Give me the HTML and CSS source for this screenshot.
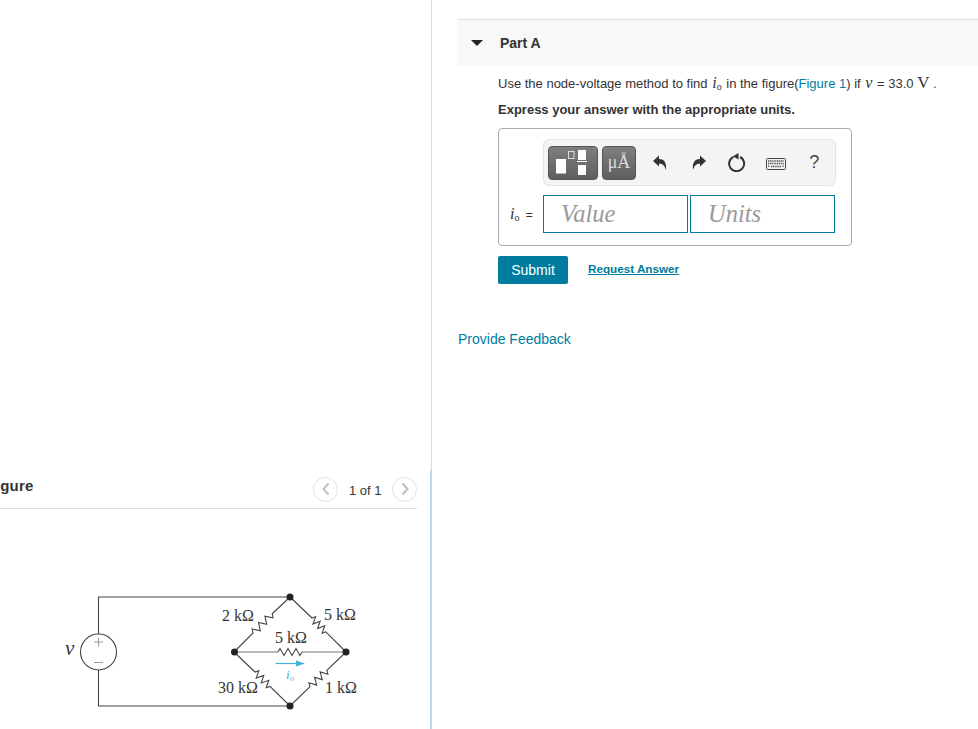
FILE: index.html

```html
<!DOCTYPE html>
<html lang="en">
<head>
  <meta charset="UTF-8" />
  <meta name="viewport" content="width=device-width, initial-scale=1.0" />
  <title>Part A</title>
  <link rel="stylesheet" href="styles.css">
</head>
<body>
  <div class="figure-pane">
    <div class="figure-head">
      <h2>Figure</h2>
      <div class="pager">
        <span class="pager-btn"><svg width="10" height="14" viewBox="0 0 10 14"><path d="M7.5 1.5 L2.5 7 L7.5 12.5" /></svg></span>
        <span class="pager-text">1 of 1</span>
        <span class="pager-btn"><svg width="10" height="14" viewBox="0 0 10 14"><path d="M2.5 1.5 L7.5 7 L2.5 12.5" /></svg></span>
      </div>
    </div>
    <svg class="circuit" width="320" height="130" viewBox="40 585 320 130">
      <!-- outer loop -->
      <path class="wire" d="M98.5 634 V597 H290 M98.5 670 V706 H290" />
      <!-- diamond with resistors -->
      <path class="wire" d="M234 652 L253 633 L252.1 628.9 L260.3 630.7 L258.5 622.5 L266.7 624.3 L264.9 616.1 L273.1 617.9 L272.2 613.8 L290 597" />
      <path class="wire" d="M290 597 L312 618 L315.6 616.6 L313 624 L320.2 621.2 L317.6 628.6 L324.8 625.8 L322.2 633.2 L325.8 631.8 L346 652" />
      <path class="wire mid" d="M234 652 H278 M302 652 H346" />
      <path class="wire" d="M278 652 L280 648.5 L284 655.5 L288 648.5 L292 655.5 L296 648.5 L300 655.5 L302 652" />
      <path class="wire" d="M234 652 L255 672 L258.8 670.7 L256.2 678.1 L263.8 675.5 L261.2 682.9 L268.8 680.3 L266.2 687.7 L270 686.4 L290 706" />
      <path class="wire" d="M290 706 L310 686.7 L308.9 682.8 L316.7 685.1 L314.5 677.4 L322.3 679.6 L320.1 671.9 L327.9 674.2 L326.8 670.3 L346 652" />
      <!-- source -->
      <circle class="wire" cx="98.5" cy="652" r="18" />
      <path class="sign" d="M94 642 H103 M98.5 637.5 V646.5 M94 662.5 H103" />
      <!-- nodes -->
      <circle class="node" cx="290" cy="597" r="3.5" />
      <circle class="node" cx="234.5" cy="652" r="3.5" />
      <circle class="node" cx="346" cy="652" r="3.5" />
      <circle class="node" cx="290" cy="706" r="3.5" />
      <!-- current arrow -->
      <path class="arrow-line" d="M275.5 663.5 H298" />
      <path class="arrow-head" d="M296 660.5 L305 663.5 L296 666.5 Z" />
      <text class="cur-label" x="286" y="679">i</text>
      <text class="cur-sub" x="290" y="681">o</text>
      <text class="val" x="222" y="621">2 kΩ</text>
      <text class="val" x="324" y="620">5 kΩ</text>
      <text class="val" x="275" y="643">5 kΩ</text>
      <text class="val" x="218" y="693">30 kΩ</text>
      <text class="val" x="325" y="693">1 kΩ</text>
      <text class="src-label" x="65" y="655">v</text>
    </svg>
  </div>

  <div class="main-pane">
    <div class="part-head">
      <span class="caret"></span>
      <span class="part-title">Part A</span>
    </div>
    <div class="part-body">
      <p class="prompt">Use the node-voltage method to find <i class="math">i<sub>o</sub></i> in the figure(<a href="#">Figure 1</a>) if <i class="math">v</i> = 33.0 <span class="unit">V</span> .</p>
      <p class="instr">Express your answer with the appropriate units.</p>
      <div class="answer-box">
        <div class="toolbar">
          <span class="tool-btn tool-wide">
            <svg width="40" height="26" viewBox="0 0 40 26">
              <rect x="3" y="9" width="10" height="14.5" fill="#fff" />
              <rect x="15.5" y="1.5" width="5.5" height="7" fill="none" stroke="#ddd" />
              <rect x="25" y="0" width="8" height="10" fill="#fff" />
              <rect x="24" y="11" width="10" height="1" fill="#fff" />
              <rect x="25" y="15" width="8" height="10" fill="#fff" />
            </svg>
          </span>
          <span class="tool-btn tool-unit">μÅ</span>
          <span class="tool-icon tool-first">
            <svg width="14" height="16" viewBox="0 0 14 16"><path d="M0 6 L6 0.5 V4 C10.5 4 14 7 13 15 C11.5 10.5 10 8.8 6 8.8 V11.5 Z" /></svg>
          </span>
          <span class="tool-icon">
            <svg width="14" height="16" viewBox="0 0 14 16"><path d="M14 6 L8 0.5 V4 C3.5 4 0 7 1 15 C2.5 10.5 4 8.8 8 8.8 V11.5 Z" /></svg>
          </span>
          <span class="tool-icon">
            <svg width="18" height="19" viewBox="0 0 18 19"><path class="reset" d="M5.5 3.9 A7.5 7.5 0 1 0 12 4" /><path d="M10.5 0 L10.5 6.5 L5 3.3 Z" /></svg>
          </span>
          <span class="tool-icon tool-keys">
            <svg width="20" height="12" viewBox="0 0 20 12">
              <rect x="0.5" y="0.5" width="19" height="11" rx="1" fill="#f4f4f4" stroke="#444" />
              <path class="keys" d="M2 3 H18 M2 5.5 H18 M2 8 H3.5 M5 8.5 H15 M16.5 8 H18" />
            </svg>
          </span>
          <span class="tool-icon tool-help">?</span>
        </div>
        <div class="input-row">
          <span class="input-label"><i class="math">i<sub>o</sub></i> <span class="eq">=</span></span>
          <span class="field">Value</span>
          <span class="field">Units</span>
        </div>
      </div>
      <div class="actions">
        <button class="submit" type="button">Submit</button>
        <a class="request" href="#">Request Answer</a>
      </div>
    </div>
    <a class="feedback" href="#">Provide Feedback</a>
  </div>
</body>
</html>
```

FILE: styles.css

```css
html, body {
  height: 100%;
}
body {
  margin: 0;
  display: flex;
  overflow: hidden;
  background: #fff;
  color: #333;
  font-family: "Liberation Sans", Arial, sans-serif;
  font-size: 14px;
}
a {
  color: #007c9e;
  text-decoration: none;
}

/* left pane */
.figure-pane {
  width: 431px;
  height: 729px;
  box-sizing: border-box;
  padding-top: 475px;
  overflow: hidden;
  flex: none;
}
.figure-head {
  width: 417px;
  height: 34px;
  box-sizing: border-box;
  border-bottom: 1px solid #ddd;
  display: flex;
  justify-content: space-between;
}
.figure-head h2 {
  margin: 0 0 0 -13.5px;
  font-size: 15px;
  letter-spacing: 0.2px;
  line-height: 22px;
  font-weight: bold;
  color: #333;
}
.pager {
  display: flex;
  align-items: center;
  align-self: flex-start;
  height: 28px;
}
.pager-btn {
  width: 23px;
  height: 23px;
  border: 1px solid #e2e2e2;
  border-radius: 50%;
  display: flex;
  align-items: center;
  justify-content: center;
}
.pager-btn path {
  fill: none;
  stroke: #bcc0c4;
  stroke-width: 2;
}
.pager-text {
  margin: 2px 11px 0;
  font-size: 13px;
  width: 32px;
  white-space: nowrap;
}
.circuit {
  display: block;
  margin-top: 76px;
  margin-left: 40px;
}
.wire {
  fill: none;
  stroke: #444;
  stroke-width: 1.1;
}
.mid {
  stroke: #777;
}
.sign {
  fill: none;
  stroke: #999;
  stroke-width: 1;
}
.node {
  fill: #222;
}
.arrow-line {
  stroke: #3fb4da;
  stroke-width: 1.2;
}
.arrow-head {
  fill: #3fb4da;
}
.val {
  font-family: "Liberation Serif", serif;
  font-size: 16px;
  fill: #333;
}
.cur-label, .cur-sub, .src-label {
  font-family: "Liberation Serif", serif;
  font-style: italic;
}
.cur-label {
  font-size: 13px;
  fill: #3fb4da;
}
.cur-sub {
  font-size: 8px;
  fill: #3fb4da;
}
.src-label {
  font-size: 21px;
  fill: #333;
}

/* right pane */
.main-pane {
  flex: 1;
  border-left: 1px solid #d9d9d9;
  padding: 19px 0 0 26px;
  min-width: 0;
  position: relative;
}
.main-pane::before {
  content: "";
  position: absolute;
  left: -2px;
  top: 470px;
  bottom: 0;
  width: 2px;
  background: #c3d5e8;
}
.part-head {
  height: 46px;
  border-top: 1px solid #e0e0e0;
  background: #f8f8f8;
  display: flex;
  align-items: center;
  padding-left: 13px;
}
.caret {
  width: 0;
  height: 0;
  border-left: 6px solid transparent;
  border-right: 6px solid transparent;
  border-top: 6px solid #222;
}
.part-title {
  margin-left: 17px;
  font-weight: bold;
  font-size: 14px;
  color: #333;
}
.part-body {
  padding-left: 40px;
}
.prompt {
  margin: 8px 0 0;
  height: 18px;
  line-height: 18px;
  font-size: 13px;
  white-space: nowrap;
}
.instr {
  margin: 9px 0 0;
  line-height: 17px;
  font-weight: bold;
  font-size: 13px;
}
.math {
  font-family: "Liberation Serif", serif;
  font-style: italic;
  font-size: 16px;
  margin: 0 1px;
}
.math sub {
  font-size: 10px;
  font-style: normal;
  line-height: 0;
  vertical-align: -2px;
}
.unit {
  font-family: "Liberation Serif", serif;
  font-size: 17px;
}
.answer-box {
  width: 354px;
  height: 118px;
  box-sizing: border-box;
  margin-top: 10px;
  border: 1px solid #aaa;
  border-radius: 4px;
  padding: 10px 15px 0 44px;
}
.toolbar {
  height: 47px;
  box-sizing: border-box;
  border: 1px solid #e4e4e4;
  border-radius: 6px;
  background: #f4f4f4;
  display: flex;
  align-items: center;
  padding-left: 4px;
}
.tool-btn {
  height: 34px;
  box-sizing: border-box;
  border: 1px solid #555;
  border-radius: 4px;
  background: linear-gradient(#7f7f7f, #5e5e5e);
  display: flex;
  align-items: center;
  justify-content: center;
  color: #ddd;
}
.tool-wide {
  width: 50px;
}
.tool-unit {
  width: 34px;
  margin-left: 4px;
  font-family: "Liberation Serif", serif;
  font-size: 18px;
}
.tool-icon {
  width: 38.5px;
  display: flex;
  justify-content: center;
  align-items: center;
}
.tool-first {
  margin-left: 5px;
}
.tool-keys {
  padding-top: 3px;
}
.tool-icon svg {
  fill: #333;
}
.reset {
  fill: none;
  stroke: #333;
  stroke-width: 2;
}
.keys {
  fill: none;
  stroke: #555;
  stroke-width: 1.3;
  stroke-dasharray: 1.2 0.6;
}
.tool-help {
  font-size: 18px;
  color: #444;
}
.input-row {
  display: flex;
  align-items: center;
  gap: 2px;
  margin-top: 9px;
  margin-left: -34px;
}
.input-label {
  width: 32px;
  font-size: 12px;
  white-space: nowrap;
}
.eq {
  margin-left: 2px;
}
.field {
  width: 145px;
  height: 38px;
  box-sizing: border-box;
  border: 1px solid #007c9e;
  padding-left: 17px;
  font-family: "Liberation Serif", serif;
  font-style: italic;
  font-size: 24.5px;
  line-height: 36px;
  color: #999;
}
.actions {
  display: flex;
  align-items: flex-start;
  margin-top: 10px;
}
.submit {
  width: 70px;
  height: 28px;
  border: 0;
  border-radius: 2px;
  background: #007c9e;
  color: #fff;
  font-family: "Liberation Sans", Arial, sans-serif;
  font-size: 14px;
  padding: 0;
}
.request {
  margin-left: 20px;
  margin-top: 6px;
  font-size: 11.7px;
  font-weight: bold;
  text-decoration: underline;
}
.feedback {
  display: block;
  margin-top: 47px;
  font-size: 14px;
}
```
